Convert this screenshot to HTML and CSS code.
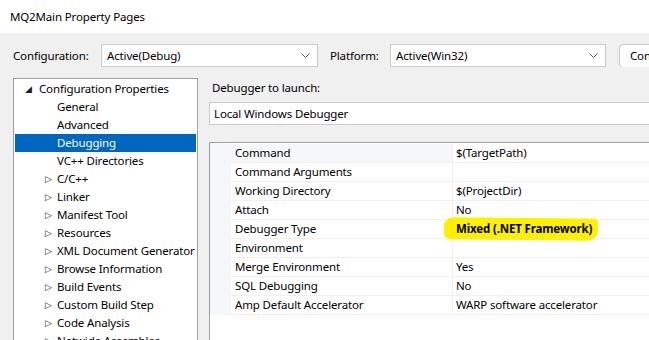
FILE: index.html
```html
<!DOCTYPE html>
<html lang="en">
<head>
    <meta charset="UTF-8">
    <title>MQ2Main Property Pages</title>
    <link rel="stylesheet" href="styles.css">
</head>
<body>
    <div class="titlebar">MQ2Main Property Pages</div>

    <div class="toolbar">
        <span class="label config-label">Configuration:</span>
        <div class="combo config-combo">
            <span>Active(Debug)</span>
            <svg class="chevron" width="9" height="5" viewBox="0 0 9 5"><path d="M0.5 0.5 L4.5 4.5 L8.5 0.5" fill="none" stroke="#606060" stroke-width="1"/></svg>
        </div>
        <span class="label platform-label">Platform:</span>
        <div class="combo platform-combo">
            <span>Active(Win32)</span>
            <svg class="chevron" width="9" height="5" viewBox="0 0 9 5"><path d="M0.5 0.5 L4.5 4.5 L8.5 0.5" fill="none" stroke="#606060" stroke-width="1"/></svg>
        </div>
        <div class="button">Configuration Manager...</div>
    </div>

    <div class="main">
        <div class="tree">
            <div class="node root"><span class="exp filled">&#9698;</span>Configuration Properties</div>
            <div class="node leaf">General</div>
            <div class="node leaf">Advanced</div>
            <div class="node leaf selected">Debugging</div>
            <div class="node leaf">VC++ Directories</div>
            <div class="node"><span class="exp">&#9655;</span>C/C++</div>
            <div class="node"><span class="exp">&#9655;</span>Linker</div>
            <div class="node"><span class="exp">&#9655;</span>Manifest Tool</div>
            <div class="node"><span class="exp">&#9655;</span>Resources</div>
            <div class="node"><span class="exp">&#9655;</span>XML Document Generator</div>
            <div class="node"><span class="exp">&#9655;</span>Browse Information</div>
            <div class="node"><span class="exp">&#9655;</span>Build Events</div>
            <div class="node"><span class="exp">&#9655;</span>Custom Build Step</div>
            <div class="node"><span class="exp">&#9655;</span>Code Analysis</div>
            <div class="node"><span class="exp">&#9655;</span>Netwide Assembler</div>
        </div>

        <div class="pane">
            <div class="pane-label">Debugger to launch:</div>
            <div class="combo launch-combo">
                <span>Local Windows Debugger</span>
            </div>

            <div class="grid">
                <div class="row current"><div class="name">Command</div><div class="value">$(TargetPath)</div></div>
                <div class="row"><div class="name">Command Arguments</div><div class="value"></div></div>
                <div class="row"><div class="name">Working Directory</div><div class="value">$(ProjectDir)</div></div>
                <div class="row"><div class="name">Attach</div><div class="value">No</div></div>
                <div class="row"><div class="name">Debugger Type</div><div class="value"><span class="marker">Mixed (.NET Framework)</span></div></div>
                <div class="row"><div class="name">Environment</div><div class="value"></div></div>
                <div class="row"><div class="name">Merge Environment</div><div class="value">Yes</div></div>
                <div class="row"><div class="name">SQL Debugging</div><div class="value">No</div></div>
                <div class="row"><div class="name">Amp Default Accelerator</div><div class="value">WARP software accelerator</div></div>
            </div>
        </div>
    </div>
</body>
</html>
```

FILE: styles.css
```css
body {
    margin: 0;
    width: 649px;
    height: 340px;
    overflow: hidden;
    background-color: #f0f0f0;
    font-family: "Noto Sans", "Open Sans", sans-serif;
    font-size: 11.5px;
    letter-spacing: -0.15px;
    color: #000000;
}
.titlebar {
    height: 33px;
    line-height: 33px;
    background-color: #ffffff;
    padding-left: 10px;
    white-space: nowrap;
}
.toolbar {
    display: flex;
    align-items: center;
    margin-top: 11px;
    padding-left: 13px;
    height: 23px;
    white-space: nowrap;
    overflow: hidden;
}
.toolbar > * {
    flex-shrink: 0;
}
.label {
    line-height: 23px;
}
.config-label {
    width: 88px;
}
.platform-label {
    width: 60px;
    margin-left: 12px;
}
.combo {
    box-sizing: border-box;
    height: 23px;
    background-color: #ffffff;
    border: 1px solid #cccccc;
    display: flex;
    align-items: center;
    padding-left: 5px;
    padding-right: 7px;
    justify-content: space-between;
    white-space: nowrap;
}
.config-combo {
    width: 217px;
}
.platform-combo {
    width: 216px;
}
.chevron {
    display: block;
}
.button {
    box-sizing: border-box;
    height: 24px;
    line-height: 22px;
    margin-left: 13px;
    padding: 0 10px;
    border: 1px solid #cccccc;
    border-radius: 4px;
    background-color: #fdfdfd;
}
.main {
    display: flex;
    margin-top: 11px;
    padding-left: 13px;
    height: 262px;
    overflow: hidden;
}
.tree {
    box-sizing: border-box;
    width: 185px;
    height: 280px;
    flex-shrink: 0;
    background-color: #ffffff;
    border: 1px solid #a0a0a0;
    padding: 1px 1px 0 1px;
    white-space: nowrap;
    overflow: hidden;
}
.node {
    height: 18px;
    line-height: 18px;
    padding-left: 42px;
}
.node.root {
    padding-left: 10px;
}
.node.selected {
    background-color: #0067c0;
    color: #ffffff;
}
.exp {
    display: inline-block;
    width: 12px;
    font-size: 9px;
    color: #1e1e1e;
    vertical-align: top;
    margin-left: -12px;
}
.node.root .exp {
    margin-left: 0;
    width: 14px;
}
.pane {
    flex-grow: 1;
    margin-left: 11px;
    min-width: 0;
}
.pane-label {
    height: 17px;
    line-height: 17px;
    margin-top: 1px;
    padding-left: 3px;
    white-space: nowrap;
}
.launch-combo {
    margin-top: 6px;
    width: 460px;
    padding-left: 4px;
}
.grid {
    margin-top: 17px;
    width: 460px;
    height: 220px;
    padding-top: 1px;
    background-color: #ffffff;
    background-image: linear-gradient(#f5f7fb, #f5f7fb);
    background-size: 21px 172px;
    background-repeat: no-repeat;
    border-top: 1px solid #a0a0a0;
    border-left: 1px solid #a0a0a0;
}
.row {
    display: flex;
    height: 19px;
    line-height: 18px;
    margin-left: 21px;
    border-bottom: 1px solid #f0f0f0;
    white-space: nowrap;
    box-sizing: border-box;
}
.name {
    box-sizing: border-box;
    width: 222px;
    padding-left: 4px;
    border-right: 1px solid #f0f0f0;
}
.row.current .name {
    background-color: #f5f7fb;
}
.value {
    padding-left: 3px;
}
.marker {
    position: relative;
    z-index: 0;
    font-weight: bold;
}
.marker::before {
    content: "";
    position: absolute;
    left: -12px;
    right: -6px;
    top: -3px;
    bottom: -4px;
    background-color: #fff000;
    border-radius: 9px 4px 10px 6px;
    transform: rotate(0.6deg);
    z-index: -1;
}
```
